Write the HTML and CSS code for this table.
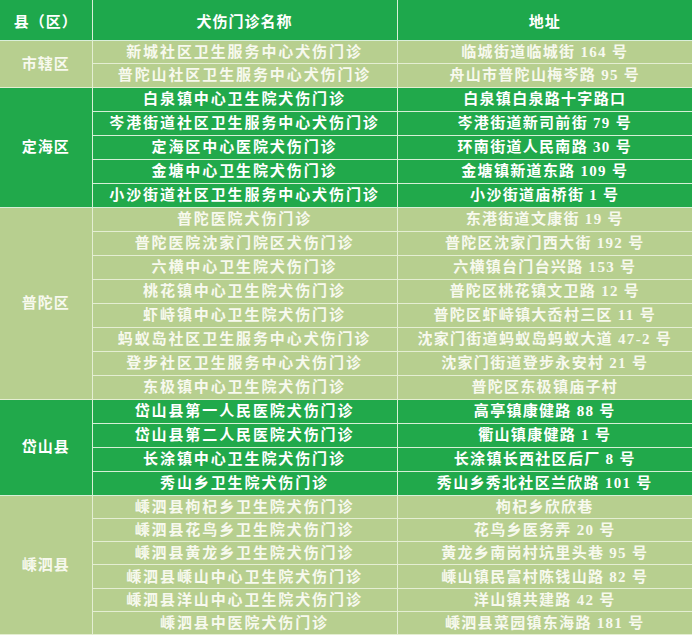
FILE: index.html
```html
<!DOCTYPE html>
<html lang="zh-CN">
<head>
<meta charset="utf-8">
<link rel="stylesheet" href="styles.css">
</head>
<body>
<table class="clinics">
  <colgroup><col class="c1"><col class="c2"><col class="c3"></colgroup>
  <thead>
    <tr class="head"><th>县（区）</th><th>犬伤门诊名称</th><th>地址</th></tr>
  </thead>
  <tbody class="light g23">
    <tr><td rowspan="2" class="county">市辖区</td><td class="name">新城社区卫生服务中心犬伤门诊</td><td class="addr">临城街道临城街 164 号</td></tr>
    <tr><td class="name">普陀山社区卫生服务中心犬伤门诊</td><td class="addr">舟山市普陀山梅岑路 95 号</td></tr>
  </tbody>
  <tbody class="dark g24">
    <tr><td rowspan="5" class="county">定海区</td><td class="name">白泉镇中心卫生院犬伤门诊</td><td class="addr">白泉镇白泉路十字路口</td></tr>
    <tr><td class="name">岑港街道社区卫生服务中心犬伤门诊</td><td class="addr">岑港街道新司前街 79 号</td></tr>
    <tr><td class="name">定海区中心医院犬伤门诊</td><td class="addr">环南街道人民南路 30 号</td></tr>
    <tr><td class="name">金塘中心卫生院犬伤门诊</td><td class="addr">金塘镇新道东路 109 号</td></tr>
    <tr><td class="name">小沙街道社区卫生服务中心犬伤门诊</td><td class="addr">小沙街道庙桥街 1 号</td></tr>
  </tbody>
  <tbody class="light g24">
    <tr><td rowspan="8" class="county">普陀区</td><td class="name">普陀医院犬伤门诊</td><td class="addr">东港街道文康街 19 号</td></tr>
    <tr><td class="name">普陀医院沈家门院区犬伤门诊</td><td class="addr">普陀区沈家门西大街 192 号</td></tr>
    <tr><td class="name">六横中心卫生院犬伤门诊</td><td class="addr">六横镇台门台兴路 153 号</td></tr>
    <tr><td class="name">桃花镇中心卫生院犬伤门诊</td><td class="addr">普陀区桃花镇文卫路 12 号</td></tr>
    <tr><td class="name">虾峙镇中心卫生院犬伤门诊</td><td class="addr">普陀区虾峙镇大岙村三区 11 号</td></tr>
    <tr><td class="name">蚂蚁岛社区卫生服务中心犬伤门诊</td><td class="addr">沈家门街道蚂蚁岛蚂蚁大道 47-2 号</td></tr>
    <tr><td class="name">登步社区卫生服务中心犬伤门诊</td><td class="addr">沈家门街道登步永安村 21 号</td></tr>
    <tr><td class="name">东极镇中心卫生院犬伤门诊</td><td class="addr">普陀区东极镇庙子村</td></tr>
  </tbody>
  <tbody class="dark g24">
    <tr><td rowspan="4" class="county">岱山县</td><td class="name">岱山县第一人民医院犬伤门诊</td><td class="addr">高亭镇康健路 88 号</td></tr>
    <tr><td class="name">岱山县第二人民医院犬伤门诊</td><td class="addr">衢山镇康健路 1 号</td></tr>
    <tr><td class="name">长涂镇中心卫生院犬伤门诊</td><td class="addr">长涂镇长西社区后厂 8 号</td></tr>
    <tr><td class="name">秀山乡卫生院犬伤门诊</td><td class="addr">秀山乡秀北社区兰欣路 101 号</td></tr>
  </tbody>
  <tbody class="light g23">
    <tr><td rowspan="6" class="county">嵊泗县</td><td class="name">嵊泗县枸杞乡卫生院犬伤门诊</td><td class="addr">枸杞乡欣欣巷</td></tr>
    <tr><td class="name">嵊泗县花鸟乡卫生院犬伤门诊</td><td class="addr">花鸟乡医务弄 20 号</td></tr>
    <tr><td class="name">嵊泗县黄龙乡卫生院犬伤门诊</td><td class="addr">黄龙乡南岗村坑里头巷 95 号</td></tr>
    <tr><td class="name">嵊泗县嵊山中心卫生院犬伤门诊</td><td class="addr">嵊山镇民富村陈钱山路 82 号</td></tr>
    <tr><td class="name">嵊泗县洋山中心卫生院犬伤门诊</td><td class="addr">洋山镇共建路 42 号</td></tr>
    <tr><td class="name">嵊泗县中医院犬伤门诊</td><td class="addr">嵊泗县菜园镇东海路 181 号</td></tr>
  </tbody>
</table>
</body>
</html>
```
FILE: styles.css
```css
html, body {
  margin: 0;
  padding: 0;
  background: #ffffff;
}
.clinics {
  width: 692px;
  border-collapse: collapse;
  table-layout: fixed;
  font-family: "Liberation Serif", "Noto Sans CJK SC", serif;
  font-weight: bold;
  color: #ffffff;
}
.c1 { width: 92px; }
.c2 { width: 305px; }
.c3 { width: 295px; }
.clinics th,
.clinics td {
  padding: 0;
  text-align: center;
  vertical-align: middle;
  border: 1px solid #e6f0d6;
  white-space: nowrap;
  overflow: hidden;
}
.head th {
  height: 40px;
  background: #1ea84c;
  font-size: 15px;
  letter-spacing: 1px;
  border-top: none;
  border-color: #d9efd9;
}
.clinics td {
  font-size: 15px;
  line-height: 18px;
}
.clinics td.name {
  letter-spacing: 1.9px;
}
.clinics td.addr {
  letter-spacing: 1.3px;
}
.clinics td.county {
  font-size: 15px;
  letter-spacing: 1px;
}
.clinics tr > :first-child { border-left: none; }
.clinics tr > :last-child { border-right: none; }
.g24 td { height: 23px; }
.g23 td { height: 22.3px; }
.light td {
  background: #b7cf8f;
  color: #f7f9ee;
  border-color: #e4eed2;
}
.dark td {
  background: #21a94b;
  color: #ffffff;
  border-color: #d6f0d6;
}
```
